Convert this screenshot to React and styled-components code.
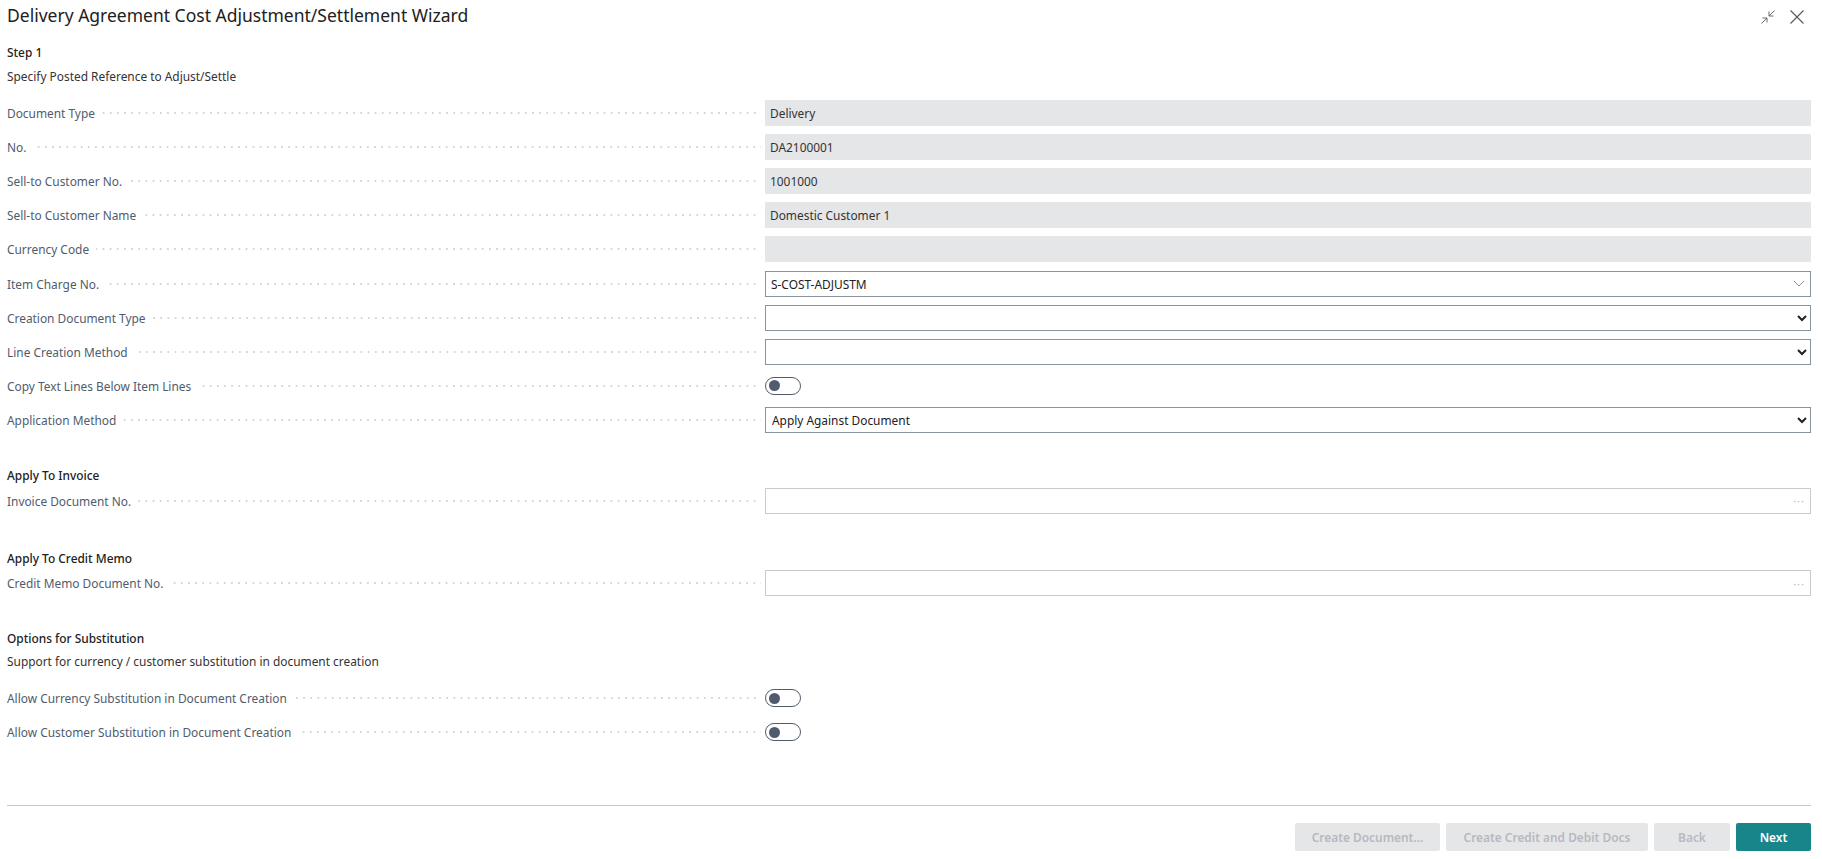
import React from 'react'
import styled, { createGlobalStyle } from 'styled-components'

const Global = createGlobalStyle`
html, body { margin: 0; padding: 0; background: #fff; }
body { font-family: "Noto Sans", "Open Sans", sans-serif; font-size: 11.9px; color: #333; overflow: hidden; }
`

const Page = styled.div`
width: 1822px;
height: 859px;
box-sizing: border-box;
padding: 0 11px 0 7px;
`
const Header = styled.div`
height: 33px;
display: flex;
align-items: center;
justify-content: space-between;
`
const Title = styled.h1`
margin: 0;
align-self: flex-start;
font-size: 17.5px;
font-weight: 400;
color: #212121;
line-height: 31px;
`
const HeaderIcons = styled.div`
display: flex;
align-items: center;
gap: 15px;
padding-right: 7px;
`
const Heading = styled.div`
height: 16px;
line-height: 16px;
font-weight: 500;
color: #212121;
margin-top: ${p => p.$top}px;
`
const Instruction = styled.div`
height: 20px;
line-height: 20px;
margin-top: ${p => p.$top || 5}px;
`
const Rows = styled.div`
margin-top: ${p => p.$top || 0}px;
`
const Row = styled.div`
height: 34.1px;
display: grid;
grid-template-columns: 758px 1fr;
align-items: center;
`
const LabelCell = styled.div`
display: flex;
align-items: center;
gap: 7px;
padding-right: 4px;
`
const Label = styled.span`
color: #505c6d;
white-space: nowrap;
`
const Leader = styled.span`
flex: 1;
height: 2px;
background-image: linear-gradient(to right, #d4d6d9 2px, transparent 2px);
background-size: 7.17px 2px;
background-position: right;
`
const ReadOnly = styled.div`
height: 26px;
line-height: 27px;
background: #e5e6e8;
padding: 0 5px;
color: #333;
`
const Lookup = styled.div`
height: 26px;
box-sizing: border-box;
display: flex;
align-items: center;
justify-content: space-between;
padding: 0 5px;
background: #fff;
border: 1px solid ${p => p.$muted ? '#c8cacd' : '#8a949e'};
color: #212121;
`
const Select = styled.select`
display: block;
width: 100%;
height: 26px;
box-sizing: border-box;
border: 1px solid #8a949e;
border-radius: 0;
background: #fff;
font: inherit;
color: #212121;
padding: 0 2px;
outline: none;
`
const Toggle = styled.div`
width: 36px;
height: 18px;
box-sizing: border-box;
border: 1px solid #505c6d;
border-radius: 9px;
background: #fff;
display: flex;
align-items: center;
padding-left: 3px;
`
const Knob = styled.span`
width: 11px;
height: 11px;
border-radius: 50%;
background: #505c6d;
`
const Dots = styled.span`
color: #b5b8bd;
font-size: 11px;
letter-spacing: 1px;
`
const Footer = styled.div`
margin-top: 56px;
border-top: 1px solid #c8c8c8;
padding-top: 17px;
display: flex;
justify-content: flex-end;
gap: 6px;
`
const Button = styled.button`
width: ${p => p.$w}px;
height: 28px;
border: none;
border-radius: 2px;
padding: 0;
font: inherit;
font-weight: 600;
background: ${p => p.$primary ? '#17858a' : '#e5e6e8'};
color: ${p => p.$primary ? '#fff' : '#b6b9c0'};
`

const CollapseIcon = () => (
  <svg width="14" height="14" viewBox="0 0 14 14" fill="none" stroke="#6a6a6a" strokeWidth="1">
    <path d="M13.5 .5 L8 6 M8 1.5 V6 H12.5" />
    <path d="M.5 13.5 L6 8 M1.5 8 H6 V12.5" />
  </svg>
)

const CloseIcon = () => (
  <svg width="14" height="14" viewBox="0 0 14 14" fill="none" stroke="#555" strokeWidth="1.1">
    <path d="M.5 .5 L13.5 13.5 M13.5 .5 L.5 13.5" />
  </svg>
)

const Chevron = () => (
  <svg width="12" height="7" viewBox="0 0 12 7" fill="none" stroke="#8f8f8f" strokeWidth="1">
    <path d="M1 1 L6 6 L11 1" />
  </svg>
)

const Field = ({ label, children }) => (
  <Row>
    <LabelCell>
      <Label>{label}</Label>
      <Leader />
    </LabelCell>
    {children}
  </Row>
)

const OffToggle = () => (
  <Toggle>
    <Knob />
  </Toggle>
)

const App = () => {
  return (
    <Page>
      <Global />
      <Header>
        <Title>Delivery Agreement Cost Adjustment/Settlement Wizard</Title>
        <HeaderIcons>
          <CollapseIcon />
          <CloseIcon />
        </HeaderIcons>
      </Header>

      <Heading $top={11}>Step 1</Heading>
      <Instruction $top={5.5}>Specify Posted Reference to Adjust/Settle</Instruction>
      <Rows $top={10.5}>
        <Field label="Document Type"><ReadOnly>Delivery</ReadOnly></Field>
        <Field label="No."><ReadOnly>DA2100001</ReadOnly></Field>
        <Field label="Sell-to Customer No."><ReadOnly>1001000</ReadOnly></Field>
        <Field label="Sell-to Customer Name"><ReadOnly>Domestic Customer 1</ReadOnly></Field>
        <Field label="Currency Code"><ReadOnly /></Field>
        <Field label="Item Charge No.">
          <Lookup>S-COST-ADJUSTM<Chevron /></Lookup>
        </Field>
        <Field label="Creation Document Type">
          <Select defaultValue=""><option value=""></option></Select>
        </Field>
        <Field label="Line Creation Method">
          <Select defaultValue=""><option value=""></option></Select>
        </Field>
        <Field label="Copy Text Lines Below Item Lines"><OffToggle /></Field>
        <Field label="Application Method">
          <Select defaultValue="doc"><option value="doc">Apply Against Document</option></Select>
        </Field>
      </Rows>

      <Heading $top={30}>Apply To Invoice</Heading>
      <Rows $top={1}>
        <Field label="Invoice Document No."><Lookup $muted><span />
          <Dots>···</Dots></Lookup></Field>
      </Rows>

      <Heading $top={32}>Apply To Credit Memo</Heading>
      <Rows>
        <Field label="Credit Memo Document No."><Lookup $muted><span />
          <Dots>···</Dots></Lookup></Field>
      </Rows>

      <Heading $top={30}>Options for Substitution</Heading>
      <Instruction>Support for currency / customer substitution in document creation</Instruction>
      <Rows $top={10}>
        <Field label="Allow Currency Substitution in Document Creation"><OffToggle /></Field>
        <Field label="Allow Customer Substitution in Document Creation"><OffToggle /></Field>
      </Rows>

      <Footer>
        <Button $w={145} disabled>Create Document...</Button>
        <Button $w={202} disabled>Create Credit and Debit Docs</Button>
        <Button $w={76} disabled>Back</Button>
        <Button $w={75} $primary>Next</Button>
      </Footer>
    </Page>
  )
}

export default App
